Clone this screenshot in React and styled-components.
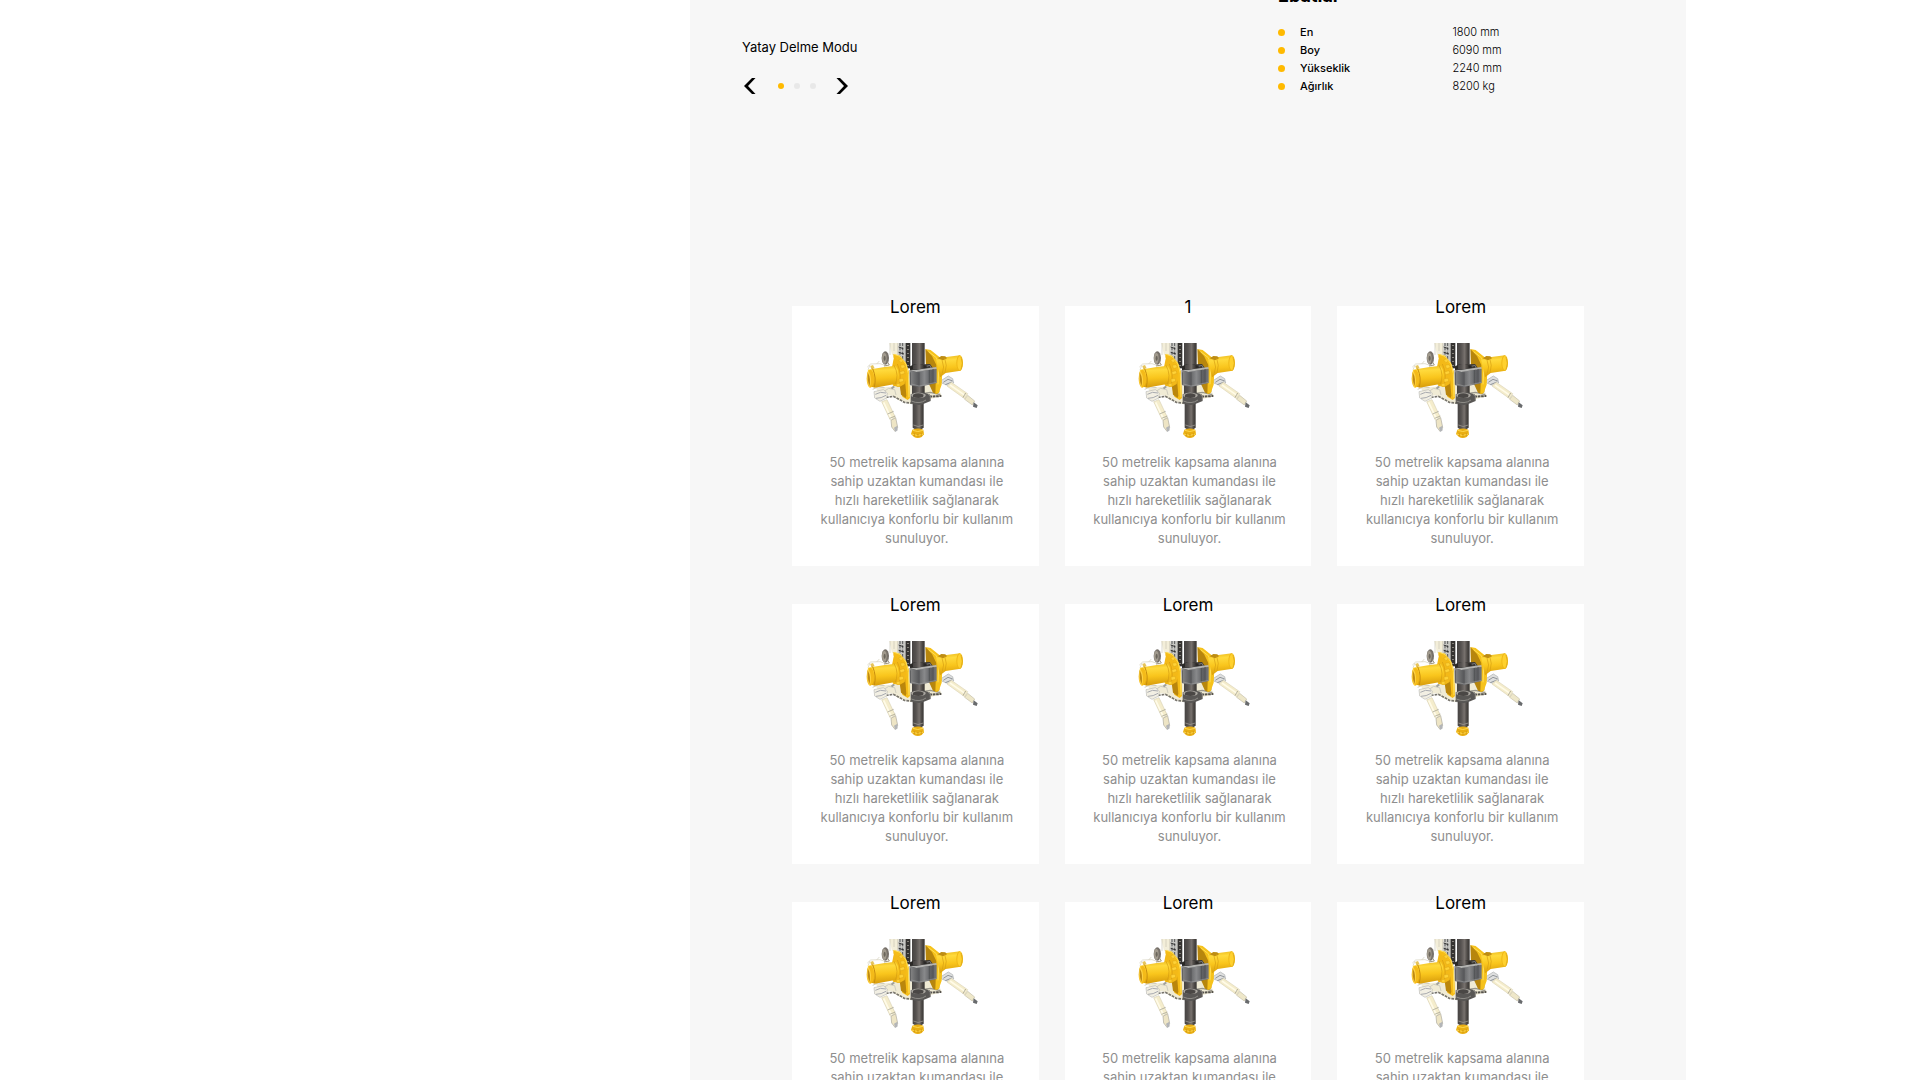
import React from "react";
import styled, { createGlobalStyle } from "styled-components";

const GlobalStyle = createGlobalStyle`
  *, *::before, *::after { box-sizing: border-box; }
  body {
    margin: 0;
    background: #fff;
    color: #000;
    font-family: Inter, "Open Sans", sans-serif;
  }
`;

const Page = styled.div`
  display: grid;
  grid-template-columns: minmax(0, 690fr) minmax(0, 996fr) minmax(0, 234fr);
  height: 100vh;
  overflow: hidden;
`;

const Panel = styled.main`
  grid-column: 2;
  background: #f7f7f7;
`;

const Overview = styled.section`
  display: grid;
  grid-template-columns: minmax(0, 536fr) minmax(0, 356fr);
  padding: 0 52px;
`;

const Slider = styled.div`
  padding-top: 36px;
`;

const SlideTitle = styled.h2`
  margin: 0;
  font-size: 13px;
  line-height: 22px;
  font-weight: 400;
`;

const SliderControls = styled.div`
  display: flex;
  align-items: center;
  height: 16px;
  margin-top: 20px;
`;

const ArrowButton = styled.button`
  display: flex;
  justify-content: center;
  width: 16px;
  padding: 0;
  border: 0;
  background: none;
  cursor: pointer;
`;

const Dots = styled.div`
  display: flex;
  gap: 10px;
  margin: 0 18px 0 20px;
`;

const Dot = styled.button`
  width: 6px;
  height: 6px;
  padding: 0;
  border: 0;
  border-radius: 50%;
  background: ${(p) => (p.$active ? "#ffba00" : "#e8e8e8")};
`;

const Specs = styled.div`
  margin-top: -16px;
`;

const SpecsTitle = styled.h2`
  margin: 0 0 15px;
  font-size: 18px;
  line-height: 24px;
  font-weight: 700;
`;

const SpecTable = styled.table`
  width: 100%;
  border-collapse: collapse;
  table-layout: fixed;
  font-size: 11px;
  line-height: 18px;
`;

const SpecName = styled.th`
  width: 49%;
  height: 18px;
  padding: 0;
  text-align: left;
  font-weight: 500;

  &::before {
    content: "";
    display: inline-block;
    width: 7px;
    height: 7px;
    margin-right: 15px;
    border-radius: 50%;
    background: #ffba00;
  }
`;

const SpecValue = styled.td`
  padding: 0;
  font-weight: 300;
`;

const CardGrid = styled.section`
  display: grid;
  grid-template-columns: repeat(3, minmax(0, 1fr));
  gap: 38px 26px;
  margin-top: 211px;
  padding: 0 102px 38px;
`;

const Card = styled.article`
  padding: 0 20px 18px;
  background: #fff;
  text-align: center;
`;

const CardTitle = styled.h3`
  margin: 0;
  position: relative;
  top: -9px;
  font-size: 17px;
  line-height: 20px;
  font-weight: 400;
`;

const CardBody = styled.div`
  display: flex;
  flex-direction: column;
  align-items: center;
  padding: 17px 0 0 3px;
`;

const CardText = styled.p`
  max-width: 198px;
  margin: 15px 0 0;
  color: #8e8e8e;
  font-size: 13px;
  line-height: 19px;
`;

const Picture = styled.svg`
  display: block;
  width: 114px;
  height: 95px;
  margin-left: 10px;
`;

const Chevron = ({ back }) => (
  <svg width="12" height="16" viewBox="0 0 12 16" aria-hidden="true">
    <path
      d={back ? "M11.5 0H8L0 8l8 8h3.500L4 8z" : "M.5 0H4l8 8-8 8H.5L8 8z"}
      fill="#000"
    />
  </svg>
);

const DrillHead = ({ id }) => (
  <Picture viewBox="45 24 342 285" role="img" aria-label="Delme ünitesi">
    <defs>
      <linearGradient id={`${id}-pipe`}>
        <stop offset="0" stopColor="#474443" />
        <stop offset=".3" stopColor="#55514f" />
        <stop offset=".6" stopColor="#77716d" />
        <stop offset=".82" stopColor="#4c4845" />
        <stop offset="1" stopColor="#393634" />
      </linearGradient>
      <linearGradient id={`${id}-drum`} x1="0" y1="0" x2=".1" y2="1">
        <stop offset="0" stopColor="#e9b418" />
        <stop offset=".25" stopColor="#ffda3c" />
        <stop offset=".6" stopColor="#f9c51c" />
        <stop offset="1" stopColor="#d99e0c" />
      </linearGradient>
      <linearGradient id={`${id}-clamp`}>
        <stop offset="0" stopColor="#8a8a8a" />
        <stop offset=".3" stopColor="#5e5f61" />
        <stop offset=".55" stopColor="#88898b" />
        <stop offset=".8" stopColor="#5c5d60" />
        <stop offset="1" stopColor="#74767a" />
      </linearGradient>
    </defs>

    {/* mast and chain behind the pipe */}
    <path d="M118 24h28v42l-20-6z" fill="#f3eed9" />
    <path d="M120 24v36M132 24v24M143 24v40" stroke="#c9c6b5" strokeWidth="2" />
    <path d="M146 24h22v78l-16-28-8-12z" fill="#c8c8c4" />
    <path d="M150 24v44M158 24v56" stroke="#57585a" strokeWidth="3" strokeDasharray="9 4" />
    <path d="M146 36l14 5M146 52l16 5" stroke="#333" strokeWidth="3" />
    <path d="M174 24v76" stroke="#353331" strokeWidth="14" />
    <path d="M174 30v70" stroke="#a09c93" strokeWidth="6" strokeDasharray="2 10" />

    {/* hoses and small wheel */}
    <path d="M52 96l10-9 28-1 20 7M60 90l-6 14M88 78l-8 9" fill="none" stroke="#d3cfb9" strokeWidth="2" />
    <path d="M61 93l8-3 5 10-10 3z" fill="#e6c45a" />
    <ellipse cx="106" cy="69" rx="11" ry="20" fill="#77716a" />
    <ellipse cx="103" cy="70" rx="7" ry="17" fill="#a29b8e" />
    <ellipse cx="104" cy="70" rx="3" ry="8" fill="#6b665c" />
    <path d="M112 80l6 10-16 3" fill="none" stroke="#9f9782" strokeWidth="3" />

    {/* lower frame */}
    <path d="M78 160l70-8 112-2 16 34-62 15-34 7-34-10-22-15-32 4z" fill="#f0ebd5" />
    <path d="M86 180l30-20 18 4 4 16M68 163l16-7 20 2" fill="none" stroke="#cfcdbf" strokeWidth="3" />
    <path d="M108 187l22-3 18 9 15 9 24 3 22-5" fill="none" stroke="#77746c" strokeWidth="5" strokeDasharray="8 3" />
    <path d="M210 194l24-9 40-2" fill="none" stroke="#55524d" strokeWidth="6" strokeDasharray="8 2" />
    <path d="M216 176l25-4 30 7" fill="none" stroke="#99968c" strokeWidth="4" />
    <path d="M122 159l8-7 5 4-8 7z" fill="#a0a09b" />

    {/* left arm */}
    <path d="M72 170l28-6 12 10-2 15-20 10-16-10z" fill="#f2efe3" stroke="#bdbdb8" strokeWidth="2" />
    <path d="M76 178q15-10 32-4M78 190q16 0 30-9" fill="none" stroke="#a9abb0" strokeWidth="3" />
    <path d="M95 200l16-6 25 53-15 8z" fill="#f5edcc" stroke="#d9d2b5" strokeWidth="2" />
    <path d="M101 202l24 51" stroke="#fffbe8" strokeWidth="5" />
    <path d="M113 237l18-8M119 250l17-7" stroke="#97968a" strokeWidth="2" />
    <path d="M123 256l14-8 6 29-8 12-10-13z" fill="#eee5c5" stroke="#aaa89b" strokeWidth="2" />
    <path d="M132 278l10-6 1 14-7 5z" fill="#b3b5b8" />

    {/* right arm */}
    <path d="M273 137l22-14 13 8 3 13-16 8-20-8z" fill="#dedfdf" stroke="#aaaead" strokeWidth="2" />
    <path d="M280 142l14-9 14 5M286 149l20-8" fill="none" stroke="#91969a" strokeWidth="3" />
    <path d="M291 153l13-11 49 34-9 15z" fill="#f4eccb" stroke="#dcd5b8" strokeWidth="2" />
    <path d="M300 150l45 31" stroke="#fffbe7" strokeWidth="5" />
    <path d="M347 174l-8 14" stroke="#8e8b7d" strokeWidth="2" />
    <path d="M353 181l21 17-7 12-23-17z" fill="#eee7c9" stroke="#c4bea7" strokeWidth="2" />
    <path d="M371 202l12 9-3 8-11-4z" fill="#696b6d" />

    {/* right drum and bracket */}
    <path d="M226 42l32 21 12 24-2 83-7 7-12-4-20-43z" fill="#b7860d" />
    <path d="M226 42l16 3 27 22 9 18-3 64-9 25-10 3 3-87-13-27z" fill="#f6c21b" />
    <path d="M236 50l23 18 8 20-3 60" fill="none" stroke="#ffdf57" strokeWidth="3" />
    <path d="M258 73l25-6 47-6q14 25 2 46l-45 7-17 13z" fill={`url(#${id}-drum)`} />
    <path d="M263 70l11-7 12 1 5 6-12 6z" fill="#be8d13" />
    <path d="M284 69q9 22 1 45M276 75q9 22 1 40" fill="none" stroke="#d79f12" strokeWidth="2" />
    <ellipse cx="329" cy="84" rx="10" ry="23" fill="#efb817" />
    <ellipse cx="330" cy="84" rx="8" ry="21" fill="#ffd12e" />
    <path d="M333 66q8 18 0 38" fill="none" stroke="#d29b15" strokeWidth="2" />
    <path d="M222 88l18-1 13 18v20l-31 12z" fill="#3c3935" />
    <path d="M229 94l11-3 6 14" fill="none" stroke="#777" strokeWidth="3" />

    {/* central pipe */}
    <path d="M186 24h38v162h-38z" fill={`url(#${id}-pipe)`} />
    <path d="M180 94q23-14 50 0v16h-50z" fill="#2b2927" />
    <path d="M189 91q15-10 32 0v11h-32z" fill={`url(#${id}-pipe)`} />
    <path d="M188 184h33v94q-16 13-33 0z" fill={`url(#${id}-pipe)`} />
    <path d="M182 178q22-13 57 0l3 20-24 10q-20 5-36-5z" fill="#595755" />
    <path d="M184 178q20-11 42 0 4 7-8 10-22 3-34-4z" fill="#aaa7a0" />
    <path d="M189 179q15-8 32 0l-2 8q-16 4-30-1z" fill="#4a4745" />
    <path d="M184 198q24 11 44-3M234 178l7 4v14" fill="none" stroke="#8d8b86" strokeWidth="3" />
    <path d="M190 270q14 9 30 0" fill="none" stroke="#aaa49c" strokeWidth="2" />

    {/* left bracket and drum */}
    <path d="M130 57l20 5 18 21 9 28 3 78-7 6-16-10-8-91-19-27z" fill="#f6bd18" />
    <path d="M146 128l17-20 6 74-2 7-14-10z" fill="#ba860c" />
    <path d="M133 58l17 6 18 23 7 28 2 72" fill="none" stroke="#ffe05b" strokeWidth="3" />
    <path d="M132 66l22 19 14 32-4 30-16 9-19-4-7-36z" fill="#f3b918" />
    <path d="M54 104l50-8 34-4q16 28 2 54l-66 12-19-6z" fill={`url(#${id}-drum)`} />
    <path d="M68 101q12 28 5 55" fill="none" stroke="#c98d0d" strokeWidth="3" />
    <path d="M132 91q17 30 2 61M142 87q14 30 6 59" fill="none" stroke="#d49b10" strokeWidth="2" />
    <ellipse cx="61" cy="131" rx="11" ry="27" fill="#f4ba19" />
    <path d="M54 105q-8 26 4 54 12-27-4-54z" fill="#ffd445" />
    <path d="M53 112q-2 23 5 42 6-22-5-42z" fill="#c08a13" />
    <path d="M146 75l9-4 5 7-7 5zM151 91l11-2 4 8-11 4zM149 111l12-4 4 8-13 4zM147 132l12-2 2 9-13 3zM139 147l10-2 1 8-9 2z" fill="#ffd236" stroke="#d19a14" strokeWidth="1" />

    {/* clamp */}
    <path d="M178 105l18 5 64-8v42l-53 12-27-5z" fill={`url(#${id}-clamp)`} />
    <path d="M178 105l21 6 61-10-1-5-59 8z" fill="#b3b3b1" />
    <path d="M181 112v37M207 112v42M238 105v43M249 103v41" stroke="#45474a" strokeWidth="2" />
    <path d="M184 147l23 6 53-11" fill="none" stroke="#999" strokeWidth="2" />

    {/* drill bit */}
    <path d="M187 284q17-7 33 0l2 14-7 8q-12 6-23 0l-9-9z" fill="#e9ae12" />
    <path d="M188 286q15 7 31 0M185 297q17 9 36 0" fill="none" stroke="#ffd94e" strokeWidth="3" />
    <path d="M193 295v8M204 297v8M214 295v7" stroke="#c48b0d" strokeWidth="2" />
  </Picture>
);

const specs = [
  ["En", "1800 mm"],
  ["Boy", "6090 mm"],
  ["Yükseklik", "2240 mm"],
  ["Ağırlık", "8200 kg"],
];

const cards = ["Lorem", "1", "Lorem", "Lorem", "Lorem", "Lorem", "Lorem", "Lorem", "Lorem"];

export default function App() {
  return (
    <>
      <GlobalStyle />
      <Page>
        <Panel>
          <Overview>
            <Slider>
              <SlideTitle>Yatay Delme Modu</SlideTitle>
              <SliderControls>
                <ArrowButton type="button" aria-label="Önceki">
                  <Chevron back />
                </ArrowButton>
                <Dots>
                  <Dot type="button" aria-label="1" $active />
                  <Dot type="button" aria-label="2" />
                  <Dot type="button" aria-label="3" />
                </Dots>
                <ArrowButton type="button" aria-label="Sonraki">
                  <Chevron />
                </ArrowButton>
              </SliderControls>
            </Slider>
            <Specs>
              <SpecsTitle>Ebatlar</SpecsTitle>
              <SpecTable>
                <tbody>
                  {specs.map(([name, value]) => (
                    <tr key={name}>
                      <SpecName scope="row">{name}</SpecName>
                      <SpecValue>{value}</SpecValue>
                    </tr>
                  ))}
                </tbody>
              </SpecTable>
            </Specs>
          </Overview>
          <CardGrid>
            {cards.map((title, i) => (
              <Card key={i}>
                <CardTitle>{title}</CardTitle>
                <CardBody>
                  <DrillHead id={`drill-${i}`} />
                  <CardText>
                    50 metrelik kapsama alanına sahip uzaktan kumandası ile hızlı
                    hareketlilik sağlanarak kullanıcıya konforlu bir kullanım
                    sunuluyor.
                  </CardText>
                </CardBody>
              </Card>
            ))}
          </CardGrid>
        </Panel>
      </Page>
    </>
  );
}
